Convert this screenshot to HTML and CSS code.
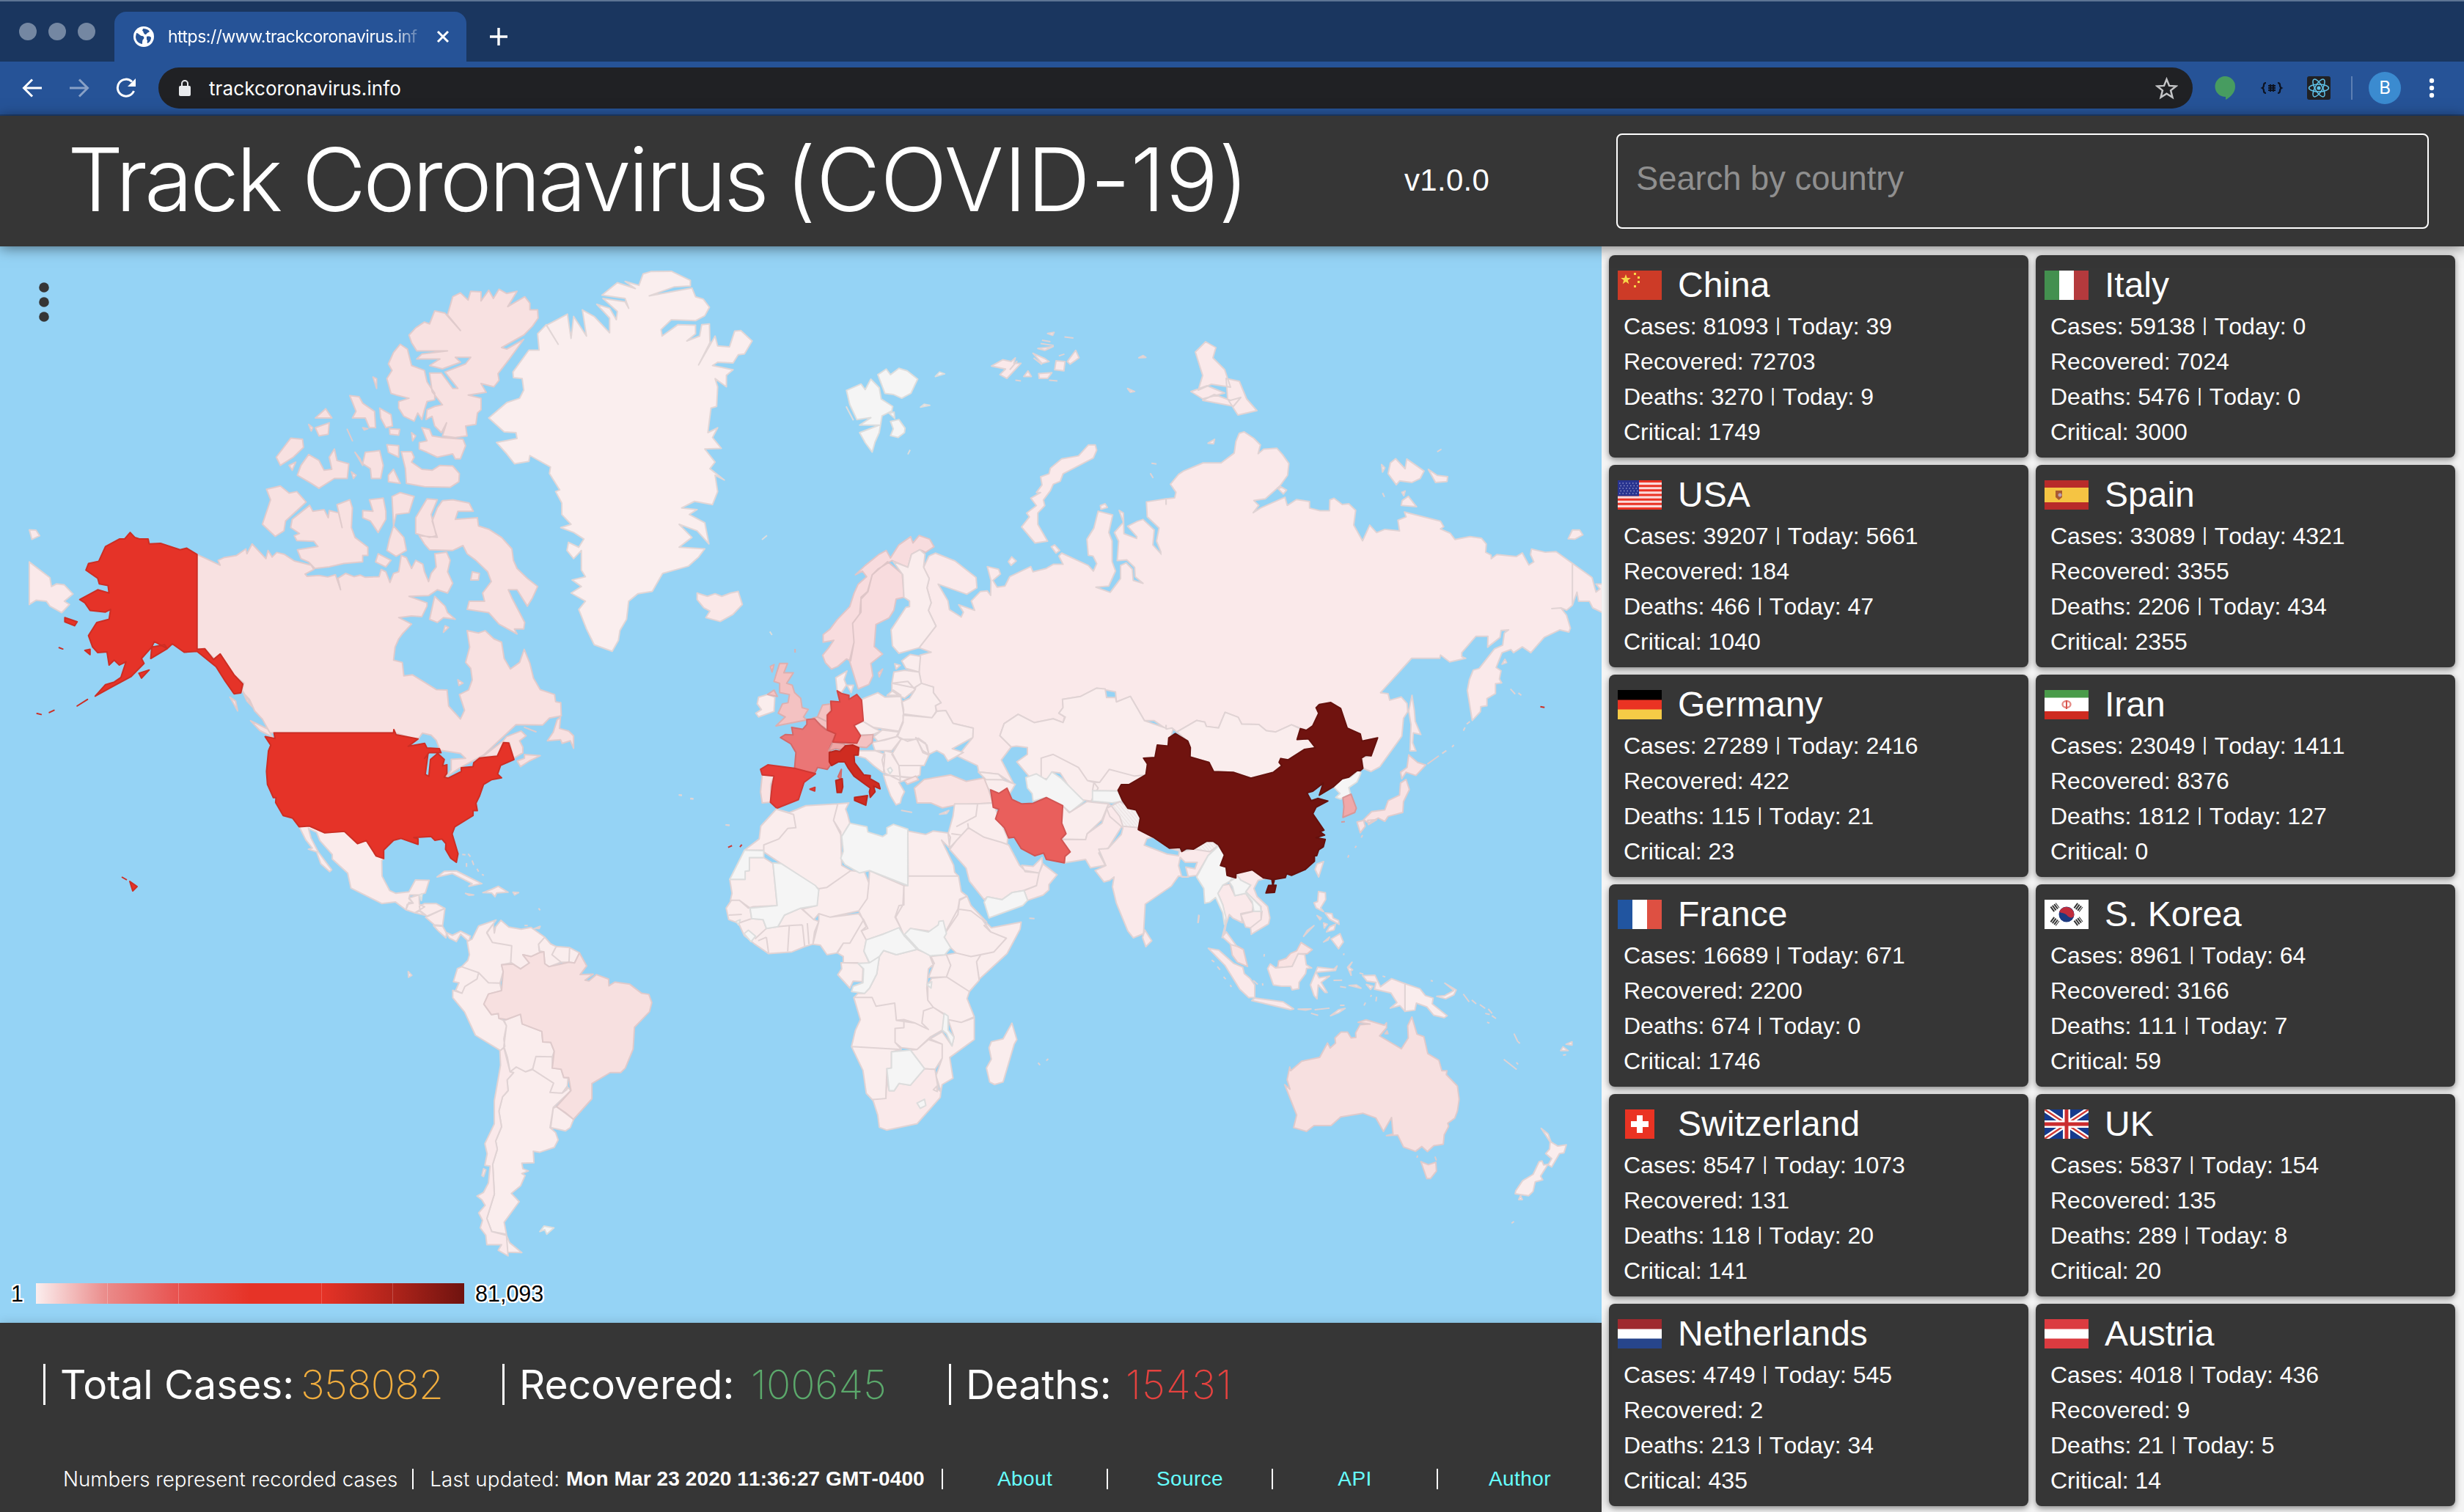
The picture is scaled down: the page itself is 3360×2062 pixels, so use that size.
FILE: index.html
```html
<!DOCTYPE html>
<html lang="en">
<head>
<meta charset="utf-8">
<title>Track Coronavirus (COVID-19)</title>
<link rel="stylesheet" href="styles.css">
</head>
<body>
<div class="browser">
  <div class="tabstrip">
    <div class="lights"><i></i><i></i><i></i></div>
    <div class="tab">
      <svg class="favicon" viewBox="0 0 28 28"><circle cx="14" cy="14" r="14" fill="#fff"/><path d="M4 9c3 0 4 3 7 4 3 0 4 2 3 4-2 1-2 4-2 7-6-1-9-5-9-10zM13 3c4 0 7 1 9 4-2 2-3 1-4 3s-3 1-4-1 0-2-2-3zM18 14c3-1 5 0 6 1 0 4-2 7-5 8-1-2 1-4-1-5z" fill="#265397"/></svg>
      <span class="tab-title">https://www.trackcoronavirus.inf</span>
      <svg class="tab-close" viewBox="0 0 18 18"><path d="M2 2l14 14M16 2L2 16" stroke="#fff" stroke-width="3"/></svg>
    </div>
    <svg class="plus" viewBox="0 0 24 24"><path d="M12 0v24M0 12h24" stroke="#fff" stroke-width="3.4"/></svg>
  </div>
  <div class="toolbar">
    <svg class="nav" viewBox="0 0 28 28"><path d="M27 14H3M14 2.500L2.500 14 14 25.500" fill="none" stroke="#fff" stroke-width="3"/></svg>
    <svg class="nav dim" viewBox="0 0 28 28"><path d="M1 14h24M14 2.500L25.500 14 14 25.500" fill="none" stroke="#fff" stroke-width="3"/></svg>
    <svg class="nav" viewBox="0 0 28 28"><path d="M24.500 18A11.500 11.500 0 1 1 22 5.500" fill="none" stroke="#fff" stroke-width="3"/><path d="M27 1v11H16z" fill="#fff"/></svg>
    <div class="omnibox">
      <svg class="lock" viewBox="0 0 16 22"><rect y="8" width="16" height="14" rx="2" fill="#e8eaed"/><path d="M4 9V5a4 4 0 0 1 8 0v4" fill="none" stroke="#e8eaed" stroke-width="2"/></svg>
      <span class="url">trackcoronavirus.info</span>
      <svg class="star" viewBox="0 0 30 30"><path d="M15 3l3.400 8.500 9 .600-7 5.700 2.300 9L15 22l-7.700 4.800 2.300-9-7-5.700 9-.600z" fill="none" stroke="#c4c5c7" stroke-width="2.400"/></svg>
    </div>
    <svg class="ext ext-a" viewBox="0 0 32 32"><path d="M16 0a14 14 0 0 1 14 14c0 8-6 14-13 18v-4A14 14 0 1 1 16 0z" fill="#479c60"/></svg>
    <svg class="ext ext-b" viewBox="0 0 32 32"><path d="M8 9q-3 0-3 3t-2 4q2 1 2 4t3 3M24 9q3 0 3 3t2 4q-2 1-2 4t-3 3M11 13h10M11 16h10M11 19h10M14 11v10M18 11v10" fill="none" stroke="#0c1220" stroke-width="2.200"/></svg>
    <svg class="ext ext-c" viewBox="0 0 32 32"><rect width="32" height="32" rx="3" fill="#202124"/><g fill="none" stroke="#61c4ea" stroke-width="1.500"><ellipse cx="16" cy="16" rx="13.500" ry="5"/><ellipse cx="16" cy="16" rx="13.500" ry="5" transform="rotate(60 16 16)"/><ellipse cx="16" cy="16" rx="13.500" ry="5" transform="rotate(120 16 16)"/></g><circle cx="16" cy="16" r="2.600" fill="#61c4ea"/></svg>
    <i class="bar-sep"></i>
    <span class="avatar">B</span>
    <svg class="more" viewBox="0 0 8 28"><g fill="#fff"><circle cx="4" cy="4" r="3.200"/><circle cx="4" cy="14" r="3.200"/><circle cx="4" cy="24" r="3.200"/></g></svg>
  </div>
</div>

<header class="header">
  <h1>Track Coronavirus <span class="caps">(COVID-19)</span></h1>
  <span class="version">v1.0.0</span>
  <input class="search" type="text" placeholder="Search by country">
</header>

<div class="content">
<main class="left">
<section class="map">
<svg class="world" viewBox="0 0 2184 1468">
<defs><pattern id="hatch" width="8" height="8" patternUnits="userSpaceOnUse" patternTransform="rotate(-40)"><rect width="8" height="8" fill="#f5f0f0"/><path d="M0 0V8" stroke="#cfcaca" stroke-width="3"/></pattern></defs>
<!-- North America, Greenland -->
<g transform="translate(0 4) scale(.70153 .44643)">
<path class="c-can" d="M383,932 428,965 424,950 435,942 460,935 478,915 480,930 490,900 502,920 517,945 521,920 529,940 538,926 553,932 572,952 605,965 610,978 593,992 597,999 620,996 637,1001 652,994 662,1040 657,1005 672,990 688,1000 700,995 710,1002 737,1000 741,978 750,985 758,1018 765,990 775,985 780,935 790,942 800,975 808,950 822,962 825,985 833,1015 838,990 848,970 845,930 868,925 875,950 870,985 880,1020 870,1050 850,1040 833,1058 795,1060 830,1080 830,1090 820,1122 800,1120 775,1125 800,1145 782,1175 775,1190 768,1215 765,1255 782,1262 785,1303 802,1300 848,1345 869,1346 872,1395 895,1435 903,1408 893,1360 911,1346 918,1315 915,1280 905,1262 913,1215 908,1165 930,1172 943,1165 960,1190 975,1200 980,1250 992,1282 1010,1262 1019,1222 1030,1265 1037,1310 1050,1345 1078,1360 1080,1382 1090,1385 1091,1425 1068,1432 1055,1453 1003,1452 940,1545 895,1583 867,1612 877,1590 877,1558 905,1555 895,1540 855,1530 848,1500 838,1484 821,1478 812,1498 765,1476 533,1476 525,1478 510,1435 495,1410 485,1375 470,1350 474,1325 454,1300 428,1236 418,1253 398,1220 383,1220Z
M518,733 545,723 562,745 577,740 595,772 555,830 552,860 535,877 510,840 526,765Z
M602,782 608,800 630,795 638,820 640,798 658,805 665,850 655,780 680,765 685,790 683,850 690,880 715,910 715,935 705,935 705,955 668,960 640,970 612,975 600,955 585,945 578,918 618,908 610,892 577,890 572,875 582,868 565,850 568,825Z
M795,262 808,240 825,222 835,228 845,188 865,195 895,248 870,200 880,145 895,133 910,155 915,128 935,130 935,158 950,125 959,150 970,122 985,135 1005,128 987,175 1020,145 1030,165 1030,185 1045,185 1046,210 1035,235 1018,262 975,300 985,305 1018,275 990,335 968,380 970,400 960,420 935,410 945,437 910,445 935,455 935,490 928,500 925,535 905,540 908,570 885,575 860,570 868,530 858,560 845,540 840,510 828,520 830,490 845,480 860,475 840,435 835,378 858,378 880,425 890,425 865,375 905,350 915,330 885,330 895,345 860,365 835,355 855,335 810,335 820,320 870,310 810,310 800,285Z
M778,290 792,305 800,355 825,370 830,405 845,440 845,460 830,465 825,490 820,520 812,500 805,525 785,510 775,485 775,465 795,455 770,445 760,440 752,395 762,370 755,350 765,315Z
M820,545 835,550 840,570 860,575 900,580 905,600 895,640 885,640 880,625 850,635 830,620 815,610 815,590 830,585Z
M780,618 800,618 805,635 800,650 820,672 840,675 855,660 880,662 893,685 892,710 875,727 825,725 790,715 788,670Z
M680,447 698,450 705,470 728,495 730,545 718,545 710,515 685,515 692,495ZM738,485 760,505 763,540 750,545 740,515ZM633,487 645,515 613,515ZM640,530 638,565 620,570 613,545ZM565,577 588,580 590,605 570,635 545,660 537,635ZM600,627 620,645 630,675 645,672 640,635 650,610 655,645 678,655 675,700 650,700 620,730 605,715 578,690 585,660ZM690,620 705,660 700,640ZM710,620 738,615 745,660 740,700 722,700 720,670 705,655ZM752,597 775,600 775,635 755,620ZM765,672 778,715 755,710 755,690ZM757,548 777,550 775,568 758,565ZM725,390 732,395 732,425ZM600,535 608,545 605,555ZM675,550 685,585ZM718,765 745,760 750,800 750,825 735,865 720,830 705,820 705,798 725,800ZM778,743 805,755 795,805 770,810 765,845 762,755ZM830,762 850,765 838,810 848,875 835,880 808,868 808,820ZM765,845 785,880 790,920 770,938 752,920 757,885ZM735,930 760,950 750,970 730,955ZM562,660 575,650 568,675ZM683,680 692,690 687,700ZM800,560 808,570 802,585ZM705,545 715,548 708,552Z
M850,790 860,768 880,765 912,775 920,800 890,800 885,825 928,820 930,845 950,855 975,880 995,915 998,950 1005,975 1025,1005 1045,1030 1035,1065 1025,1090 1005,1040 988,1040 995,1065 1020,1140 1018,1160 1000,1160 1005,1175 970,1145 950,1110 908,1100 912,1075 942,1075 938,1050 955,1015 948,985 925,950 908,930 900,905 880,920 835,918 825,900 815,875 850,880 840,830Z
M845,1060 865,1090 870,1110 885,1130 862,1125 850,1140 835,1130ZM865,1150 872,1155 862,1170ZM918,985 932,990 930,1010 915,1010ZM487,1440 520,1465 530,1490 505,1470ZM447,1368 458,1380 462,1410ZM890,1315 900,1325 892,1332ZM470,1345 492,1400 480,1380Z"/>
<path class="c-grl" d="M1250,75 1265,68 1305,67 1342,95 1342,112 1310,115 1262,142 1345,118 1352,145 1367,152 1379,177 1370,203 1352,218 1305,215 1285,245 1287,265 1318,230 1352,232 1352,258 1335,280 1360,265 1364,230 1379,228 1380,285 1358,353 1390,265 1395,295 1418,298 1428,250 1440,248 1462,280 1447,320 1435,322 1425,347 1395,345 1385,355 1425,368 1412,385 1412,420 1390,395 1395,420 1393,480 1382,485 1376,560 1395,545 1385,575 1402,608 1370,610 1390,650 1380,670 1408,705 1390,690 1395,740 1385,780 1350,770 1325,790 1355,795 1340,810 1370,835 1378,900 1355,860 1320,840 1345,880 1320,910 1370,915 1358,940 1338,968 1288,990 1268,1045 1240,1052 1222,1075 1218,1130 1205,1165 1202,1195 1190,1228 1155,1208 1140,1160 1125,1100 1138,1075 1110,1050 1130,1030 1112,1010 1138,1000 1130,980 1130,920 1115,945 1102,920 1105,895 1125,910 1135,885 1115,865 1090,850 1110,840 1092,810 1092,775 1080,740 1088,735 1068,685 1070,665 1030,630 1028,648 1000,655 985,625 965,590 1005,578 1003,560 980,558 950,515 985,468 1010,455 1018,430 1015,395 998,392 997,375 1028,308 1048,308 1045,258 1062,230 1085,290 1062,232 1103,198 1110,272 1115,205 1140,265 1132,185 1155,205 1185,255 1185,210 1160,168 1185,180 1198,215 1200,190 1172,150 1215,160 1222,180 1215,150 1170,140 1200,102 1235,120 1215,98 1242,110Z"/>
<path class="c-usa" d="M253,865 262,880 272,885 288,885 290,900 312,898 350,918 363,913 383,932 383,1222 398,1220 415,1253 428,1236 455,1300 472,1328 468,1355 455,1358 438,1320 420,1275 383,1228 358,1231 335,1205 325,1220 300,1198 295,1215 275,1250 280,1265 255,1305 220,1335 185,1365 205,1330 222,1322 235,1308 245,1260 232,1270 222,1255 212,1270 208,1230 190,1232 180,1215 172,1180 188,1140 212,1130 215,1100 205,1108 175,1103 165,1080 155,1070 190,1040 212,1050 210,1027 193,1022 190,1005 167,980 172,960 192,953 205,908 232,885 242,885ZM126,1125 150,1138 145,1150 126,1138ZM270,1295 290,1285 275,1310ZM150,1395 170,1375ZM96,1415 105,1408ZM72,1418 80,1421ZM165,1225 175,1222 175,1238ZM295,1215 320,1208 325,1220 293,1250ZM115,1217 122,1221Z"/>
<path class="c-rus" d="M57,857 70,858 77,875 62,886ZM57,955 97,1003 100,1030 110,1022 125,1025 142,1053 125,1075 135,1085 120,1110 97,1090 90,1075 70,1072 57,1085Z"/>
<path class="c-isl" d="M1355,1050 1375,1060 1390,1052 1403,1060 1420,1050 1435,1045 1443,1085 1425,1115 1400,1137 1372,1125 1380,1105 1368,1095 1355,1070Z"/>
</g>
<!-- USA, Latin America -->
<g transform="translate(300 614) scale(.44643 .5102)">
<path class="c-can" d="M803,160 865,118 875,107 920,92 935,105 915,118 925,135 925,150 897,165 884,123 865,122 847,158 793,162ZM930,155 978,158 945,172 918,187 908,172 930,165ZM1030,62 1040,55 1037,85 1065,92 1080,105 1080,138 1070,118 1045,125 1040,115 1000,118 1018,95ZM930,82 965,94Z"/>
<path class="c-mex" d="M242,348 273,346 320,364 380,360 420,393 447,385 477,426 500,433 494,438 495,480 518,518 537,526 577,522 597,490 639,491 627,525 609,530 580,530 577,540 590,552 572,555 568,570 536,549 494,553 400,512 390,472 343,434 343,422 305,385 295,363 270,352 278,378 300,415 341,463 335,468 308,447 295,415 270,408 282,405 262,383Z
M568,570 577,550 590,552 578,538 608,530 609,555 625,562 595,578ZM609,560 625,553 660,553 687,566 632,587 612,575ZM687,566 680,612 655,610 628,590ZM652,612 680,614 692,632 690,645 665,625ZM690,630 710,638 735,627 765,640 760,655 735,635 722,655 700,645ZM595,578 612,573 630,585Z
M663,482 685,467 722,466 800,500 760,507 770,500 710,473ZM803,524 830,515 850,507 880,523 845,525 840,535 830,525ZM750,526 775,530 760,531ZM895,523 912,524 900,530ZM960,620 978,614 975,620ZM740,422 750,423M758,420 765,428M770,438 775,450M785,460 790,468M753,445 753,455M800,475 806,478M930,612 940,612M973,566 978,571M575,735 586,745 576,750Z"/>
<path class="c-usa" d="M138,107 168,112 165,97 530,97 531,88 538,102 605,113 575,133 625,125 632,137 670,139 675,150 638,150 625,165 635,155 627,208 638,213 643,168 665,152 685,168 680,185 693,182 693,205 685,215 697,218 737,200 737,190 773,187 775,177 793,164 847,159 866,123 882,124 898,168 857,184 848,207 860,217 830,222 805,235 793,265 782,285 786,305 773,305 773,318 717,348 709,367 727,420 722,443 705,432 689,408 690,393 678,381 656,384 645,374 592,377 605,380 605,395 553,379 530,384 500,410 500,433 477,426 447,385 420,393 380,360 320,364 273,346 242,348 222,325 193,318 170,283 171,270 163,270 145,235 142,200 148,145 155,130Z"/>
<path class="c-none" d="M610,530 618,527 615,545ZM977,1430 990,1415 1020,1420 998,1437 992,1425Z"/>
<path class="c-few" d="M843,597 790,613 770,648 755,655 762,690 757,705 738,722 790,738 820,765 855,766 865,735 860,717 888,712 891,666 832,657 815,632Z
M858,598 882,616 920,622 950,617 992,643 973,662 977,684 950,695 925,690 945,712 918,728 888,710 891,666 832,657 815,630 835,607 838,632 842,615Z
M992,643 1010,661 1027,668 1014,690 1042,710 1005,722 992,714 989,682 975,680 973,662ZM1027,668 1068,671 1066,710 1042,710 1014,690ZM1068,671 1098,685 1083,712 1066,710Z
M738,722 790,738 785,755 748,775 739,793 720,785 730,765 713,762 725,727Z
M790,738 820,765 855,766 860,786 820,795 806,822 829,850 850,847 852,860 865,865 875,880 867,915 870,935 858,947 780,905 747,843 711,805 711,785 739,793 748,775 785,755Z
M918,849 923,875 983,895 986,923 1010,924 1021,948 1015,963 965,962 955,995 933,1003 905,990 886,1003 878,965 867,935 875,880 868,866Z
M965,962 1015,963 1015,993 1042,996 1050,1018 1063,1020 1060,1050 1045,1060 1008,1058 1019,1033 955,997Z
M886,1003 905,990 933,1003 955,997 1019,1033 1008,1058 1045,1060 1060,1042 1072,1053 1018,1098 1008,1152 1025,1165 1033,1185 1021,1205 977,1218 957,1215 959,1246 922,1247 925,1262 942,1268 922,1275 932,1280 918,1308 890,1328 914,1350 868,1405 875,1437 830,1430 815,1395 838,1330 833,1250 847,1210 842,1188 860,1150 852,1108 863,1070 880,1053 877,1025Z
M1018,1100 1028,1096 1080,1130 1070,1152 1055,1161 1010,1152ZM875,1440 885,1460 922,1486 876,1485Z"/>
<path class="c-rus" d="M855,947 867,938 886,1003 897,1005 877,1025 880,1053 863,1070 852,1108 860,1150 842,1188 847,1210 833,1250 838,1330 815,1395 830,1430 875,1440 880,1495 850,1480 860,1465 815,1465 812,1440 795,1420 802,1400 790,1380 810,1360 800,1345 785,1335 805,1325 820,1300 825,1255 809,1253 816,1222 809,1195 838,1142 838,1080 857,985ZM805,1262 812,1265 805,1283 800,1280Z"/>
<path class="c-bra" d="M989,682 992,714 1005,722 1066,710 1083,712 1098,685 1120,720 1100,743 1140,742 1115,758 1127,760 1150,743 1187,755 1188,773 1206,763 1252,769 1288,793 1310,796 1319,818 1312,842 1266,884 1262,942 1238,993 1224,1005 1192,1005 1136,1034 1136,1075 1080,1130 1055,1112 1028,1096 1072,1053 1065,1018 1050,1018 1042,996 1015,993 1021,948 1010,924 986,923 983,895 923,875 918,849 875,863 852,860 850,847 829,850 806,822 820,795 860,786 865,735 860,717 895,715 918,728 945,712 925,690 950,695 977,684Z"/>
<path class="c-none" d="M1402,263 1411,264M1437,272 1446,273M1545,343 1556,344"/>
</g>
<path class="c-usa" d="M166,860l7,4M177,866l10,7 -6,6z"/>
<!-- Europe and western Russia -->
<g transform="translate(1000 4) scale(.38265 .5102)">
<path class="c-rus" d="M1542,667 1472,675 1475,715 1517,745 1508,780 1528,817 1495,790 1500,750 1460,722 1440,727 1405,740 1438,768 1437,773 1392,760 1390,705 1375,698 1390,730 1358,757 1373,780 1368,832 1402,830 1430,850 1432,875 1460,893 1425,885 1422,855 1400,838 1380,845 1380,880 1343,917 1292,903 1338,900 1362,860 1350,835 1350,780 1338,757 1352,710 1300,700 1285,745 1260,775 1265,818 1282,820 1295,840 1283,860 1265,845 1170,812 1160,820 1175,842 1140,842 1115,853 1068,862 1060,848 985,875 968,900 940,903 925,885 952,868 945,855 905,848 918,885 917,925 905,913 880,915 848,940 860,965 803,950 820,970 812,983 770,963 765,940 730,895 832,922 868,905 865,877 790,833 720,812 697,820 678,850 698,880 690,905 705,945 695,965 722,1007 662,1065 705,1077 665,1085 662,1130 670,1160 713,1170 713,1185 740,1212 720,1220 725,1235 757,1233 783,1267 855,1280 853,1305 800,1355 870,1380 875,1397 945,1403 1000,1430 955,1365 990,1330 950,1300 965,1268 1015,1243 1072,1265 1140,1255 1175,1265 1180,1250 1160,1240 1175,1225 1173,1203 1238,1195 1295,1173 1362,1183 1365,1210 1415,1195 1465,1260 1500,1260 1542,1282Z
M1265,523 1290,523 1295,537 1283,558 1175,600 1165,620 1140,628 1130,645 1105,670 1110,685 1085,705 1085,735 1120,780 1075,785 1027,742 1055,715 1045,705 1080,685 1060,665 1095,650 1080,650 1100,630 1095,608 1125,600 1130,585 1170,560 1230,552Z
M920,312 960,295 990,300 1005,290 1000,305 1025,305 975,345 950,335 970,320ZM1068,278 1110,292 1125,300 1100,305ZM1150,298 1182,300 1178,325 1145,322ZM1190,300 1220,270 1232,290 1200,307ZM1088,332 1135,330 1120,345 1090,345ZM1085,265 1140,260 1110,270ZM1120,225 1143,222 1138,230ZM1180,234 1212,237M1445,290 1460,284 1470,289ZM1405,372 1430,380 1415,382ZM1005,350 1025,352M1035,340 1050,325 1062,340ZM1125,350 1155,352M1100,243 1130,247M1095,252 1142,257M1070,290 1100,308M1160,285 1180,280M985,322 1012,298M1308,685 1325,680 1333,690 1310,695ZM980,835 992,822 1008,833 990,845ZM1133,795 1145,790 1163,805 1150,812ZM1490,572 1508,574M1487,600 1495,610Z"/>
<path class="c-none" d="M403,377 455,360 470,375 490,347 520,370 527,400 568,420 565,432 530,445 520,490 505,515 495,542 470,517 450,490 520,470 450,470 490,450 440,455 415,415ZM515,335 545,320 560,335 590,318 620,325 657,347 633,385 600,398 570,388 540,385 525,355ZM560,460 590,455 612,478 610,490 587,503 560,498 570,480ZM555,438 573,435 575,452ZM402,420 428,457M720,340 735,328 753,333ZM667,422 680,414 700,417ZM622,548 630,536M102,776 120,765M130,1022 138,1031"/>
<path class="c-nor" d="M435,870 470,845 520,815 545,805 560,825 590,790 632,768 640,785 662,765 700,775 715,795 685,810 665,803 635,815 622,850 565,832 515,855 495,870 480,915 455,935 450,975 425,1000 430,1050 418,1100 403,1095 372,1115 350,1122 328,1105 318,1085 340,1065 358,1045 320,1050 320,1030 345,1015 370,990 415,955 430,920 445,895 475,875 460,860Z
M550,835 602,868 608,930 580,935 572,965 555,985 508,1003 502,1062 532,1082 490,1107 497,1140 483,1163 445,1175 414,1100 430,1050 425,1000 455,970 455,930 478,915 495,870 518,855ZM517,1132 532,1122 520,1143Z"/>
<path class="c-few" d="M665,803 683,815 678,850 698,880 690,905 705,945 695,965 722,1007 662,1065 590,1080 567,1060 562,1017 615,957 628,955 628,940 608,930 604,870 570,835 622,850 635,815Z
M365,1145 405,1127 395,1150 403,1165 385,1185 370,1180ZM405,1165 428,1165 420,1185ZM122,1190 148,1197 145,1235 90,1250 80,1240 100,1230 85,1215 90,1197Z
M457,1203 515,1185 540,1197 597,1195 607,1230 605,1260 590,1288 500,1278 463,1262ZM430,1273 463,1262 502,1280 525,1288 495,1298 453,1297ZM500,1303 530,1285 590,1290 580,1303 515,1315ZM495,1318 540,1312 585,1302 597,1310 565,1340 505,1340Z
M600,1100 630,1083 667,1088 662,1130 615,1120ZM572,1130 610,1125 662,1130 670,1160 645,1172 565,1160ZM565,1160 622,1155 648,1177 610,1200 595,1195 565,1180ZM548,1192 570,1178 597,1192ZM575,1108 595,1112 580,1122Z
M650,1170 670,1160 713,1170 713,1185 740,1212 720,1220 723,1235 708,1252 607,1242 600,1210 628,1200 648,1177Z
M605,1245 708,1252 725,1235 757,1233 783,1267 855,1280 853,1305 780,1335 820,1345 765,1368 750,1350 725,1340 697,1350 685,1320 660,1307 620,1315 585,1302 605,1265Z
M597,1310 655,1310 675,1345 697,1352 680,1380 590,1380 565,1350ZM650,1305 690,1325 697,1350 675,1340ZM590,1380 668,1380 665,1405 640,1415 595,1410ZM540,1340 565,1345 590,1380 595,1420 540,1400 530,1365ZM445,1340 505,1340 540,1350 535,1400 500,1380 470,1360 445,1355ZM535,1405 640,1412 590,1425 610,1450 600,1465 595,1480 580,1485 560,1460 545,1430ZM600,1500 635,1505ZM735,1510 768,1500 760,1508Z
M873,1397 945,1403 965,1418 900,1417ZM895,1417 960,1418 1005,1430 985,1455 940,1455 905,1440Z
M950,1300 965,1268 1015,1243 1072,1265 1140,1255 1175,1265 1183,1250 1160,1240 1175,1225 1173,1203 1238,1195 1295,1173 1325,1175 1330,1198 1362,1198 1365,1210 1415,1195 1465,1260 1542,1280 1568,1280 1550,1327 1510,1327 1502,1360 1473,1360 1475,1405 1430,1408 1340,1390 1305,1425 1262,1420 1230,1385 1140,1350 1097,1360 1097,1415 1055,1410 1010,1370 1048,1350 1048,1332 1010,1328 990,1330Z
M1097,1360 1140,1350 1230,1385 1262,1420 1285,1425 1300,1440 1275,1475 1225,1470 1165,1400 1135,1397 1125,1415 1097,1415ZM1285,1425 1305,1425 1340,1390 1430,1408 1475,1405 1410,1432 1370,1448 1280,1447Z"/>
<path class="c-tur" d="M645,1440 680,1417 775,1405 830,1422 893,1413 910,1445 925,1480 795,1485 745,1493 705,1480 655,1480ZM610,1420 650,1408 660,1418 620,1430ZM103,1405 145,1408 133,1430 133,1478 103,1480 97,1450Z"/>
<path class="c-none" d="M1042,1412 1080,1402 1115,1418 1135,1397 1170,1415 1250,1475 1200,1505 1172,1487 1115,1465 1068,1475 1065,1455 1048,1440ZM1280,1447 1370,1448 1390,1475 1350,1480 1280,1475ZM550,1390 560,1385 567,1393 558,1402Z"/>
<path class="c-gbr" d="M165,1107 193,1107 180,1132 214,1132 190,1160 210,1165 218,1185 240,1200 245,1225 267,1230 250,1250 262,1258 152,1274 185,1250 160,1240 175,1215 195,1212 200,1190 165,1185 165,1160 145,1155 155,1130ZM122,1190 145,1178 157,1195ZM132,1115 145,1110 138,1130ZM220,1068V1078M347,1215 345,1235 333,1245 333,1262 300,1250 318,1218ZM283,1253 300,1250 333,1262 337,1285 318,1275ZM400,1322 440,1320 453,1300 498,1297 495,1318 475,1332 445,1330Z"/>
<path class="c-fra" d="M262,1257 290,1255 310,1272 332,1285 365,1295 342,1335 355,1370 335,1390 300,1385 290,1400 218,1390 223,1345 205,1322 168,1305 185,1297 213,1298 208,1278 247,1283 262,1270ZM385,1390 383,1417 373,1410Z"/>
<path class="c-che" d="M355,1317 395,1322 400,1333 380,1337 365,1335 340,1340Z"/>
<path class="c-deu" d="M370,1180 385,1187 412,1192 412,1203 440,1190 457,1205 463,1260 430,1273 453,1300 440,1320 355,1317 365,1295 335,1285 335,1245 350,1233 347,1208 380,1210Z"/>
<path class="c-esp" d="M97,1390 123,1378 218,1387 293,1402 252,1425 232,1471 155,1494 132,1478 138,1435 145,1408 103,1405ZM273,1443 291,1438 290,1448Z"/>
<path class="c-ita" d="M342,1345 365,1340 380,1342 400,1327 425,1325 447,1332 445,1352 430,1352 432,1372 465,1405 488,1407 487,1415 518,1428 523,1442 500,1435 505,1450 488,1465 485,1450 488,1440 430,1408 408,1385 397,1370 375,1370 350,1380 342,1370ZM432,1465 478,1460 472,1486 432,1473ZM365,1420 388,1415 390,1437 385,1452 370,1452Z"/>
</g>
<!-- Africa and the Middle East -->
<g transform="translate(900 514) scale(.44643 .47832)">
<path class="c-few" d="M355,530 408,545 415,583 390,585 363,615 317,632 317,647 258,647 303,615 308,578Z
M355,530 395,540 445,520 543,515 530,562 552,595 555,690 583,705 510,753 485,757 317,652 317,632 363,615 390,585 415,583 408,545Z
M543,515 577,512 567,530 573,545 580,570 555,608 530,562ZM757,592 812,602 835,592 880,598 887,610 883,640 860,618 897,690 900,710 912,721 758,721Z
M213,730 260,730 260,707 273,705 273,668 317,668 345,685 358,805 285,808 270,812 243,790 215,790 220,770Z
M485,757 510,753 583,705 625,710 638,740 633,785 607,820 520,838 485,828 470,845 435,815 478,805Z
M640,705 745,748 742,803 720,838 735,868 680,887 630,903 615,877 630,865 607,820 633,785 638,740Z
M758,721 912,721 920,765 938,778 915,790 910,830 870,885 862,850 840,880 765,870 745,890 735,868 718,838 730,805 745,803 745,748 757,748Z
M910,815 950,820 985,845 1010,880 1058,898 1020,937 950,950 905,940 888,925 868,895 875,875ZM938,778 950,805 998,852 985,845 950,820 910,815 915,787Z
M998,855 1012,868 1103,852 1100,872 1060,942 975,1015 967,965 980,945 1020,937 1058,898 1010,880 990,862ZM905,940 950,950 980,945 967,965 975,1018 945,1050 875,1008 888,975 875,945ZM825,950 875,945 888,975 875,1008 820,1010 835,975Z
M875,1008 945,1050 938,1070 960,1122 920,1138 880,1130 865,1112 835,1095 818,1075 818,1030 830,1012Z
M683,933 722,945 785,930 825,945 838,970 820,985 815,1040 818,1075 835,1095 805,1105 800,1140 820,1158 780,1140 722,1132 717,1083 660,1092 648,1067 592,1067 605,1055 625,1055 640,1040 662,1000 670,950Z
M553,968 605,968 620,985 618,1022 590,1020 580,1040 543,1002 555,985ZM622,845 635,870 615,877 630,903 623,935 640,970 560,968 560,950 542,940 560,912 580,912ZM485,828 520,838 607,828 622,845 580,912 560,912 540,940 510,945 490,918 467,915 472,880 485,850Z
M470,845 485,850 467,915 442,922 403,937 332,942 290,915 257,890 240,855 210,845 202,812 218,790 243,790 275,812 280,842 315,845 325,870 360,865 380,832 430,812ZM210,832 250,830M240,855 280,842M290,900 325,870M325,895 332,942M395,862 390,935M360,865 395,862 435,860M435,860 442,922M450,855 455,915M300,905 325,895
M592,1067 648,1067 660,1092 717,1083 722,1132 745,1130 745,1153 718,1155 718,1195 737,1215 585,1207 597,1160 612,1130ZM718,1155 745,1153 745,1130 780,1140 820,1158 800,1140 805,1105 835,1095 875,1120 862,1160 825,1180 785,1215 737,1210 718,1195Z
M880,1130 920,1138 960,1125 960,1187 885,1238 895,1297 862,1315 858,1335 843,1290 862,1240 862,1200 825,1185 862,1165 892,1205 898,1180ZM785,1215 820,1187 862,1200 862,1240 840,1272 808,1270 765,1217ZM585,1207 737,1215 707,1222 707,1268 693,1270 690,1355 650,1360 630,1340 620,1275Z
M1075,1140 1090,1187 1082,1200 1048,1308 1022,1315 1007,1308 997,1268 1012,1243 1005,1210 1012,1193 1048,1185Z
M900,515 970,515 1018,512 1035,555 1062,612 1060,632 990,612 942,583 905,620 885,640 880,600 895,550ZM970,515 965,550 905,580M940,570 942,583M890,600 930,605M1230,520 1250,540 1305,508 1320,510 1370,515 1350,560 1305,600 1300,617 1228,615 1240,600 1227,570ZM1155,1253 1161,1260M1180,1247 1186,1242M1128,841 1144,842M57,489 67,490M92,500 102,501M200,575 213,576"/>
<path class="c-rus" d="M690,1355 693,1300 700,1333 715,1333 730,1312 765,1317 808,1270 840,1272 850,1330 858,1335 856,1352 785,1427 692,1445 670,1437 665,1402 650,1358ZM835,1330 845,1320 847,1335ZM885,645 905,620 942,583 990,610 1045,625 1065,632 1098,690 1115,705 1158,712 1150,748 1110,762 1075,768 1045,788 1000,780 990,788 945,735 935,698ZM1158,712 1168,685 1213,717 1188,745 1188,760 1170,775 1123,790 1112,762 1150,748ZM1105,690 1140,693 1167,668 1168,690 1158,712 1115,708ZM1370,515 1410,540 1410,580 1370,640 1340,655 1360,690 1315,697 1300,673 1235,683 1237,665 1253,652 1225,617 1300,617 1305,600 1350,570Z"/>
<path class="c-none" d="M258,647 317,648 317,668 273,668 273,705 260,707 260,730 213,730ZM580,570 632,580 635,595 680,608 693,600 693,583 713,573 757,587 757,748 640,705 610,712 565,688 552,670 560,650 555,608ZM345,683 370,685 475,748 485,760 480,805 430,812 380,832 360,865 325,870 315,845 280,842 275,812 358,805ZM765,870 820,880 850,860 852,850 865,848 875,885 868,895 888,925 870,945 825,948 790,930 747,887ZM630,903 680,887 730,868 745,890 785,930 722,945 683,933 670,950 640,968 623,935ZM670,950 662,1000 640,1040 625,1055 585,1050 590,1035 620,1025 622,985 605,970 640,968ZM868,1112 880,1120 880,1160 898,1180 892,1205 875,1170 862,1160ZM707,1222 765,1217 808,1270 765,1317 730,1312 715,1333 700,1333 693,1270 707,1268ZM785,1368 808,1357 812,1375 795,1383ZM990,795 1000,780 1045,788 1075,768 1112,762 1123,790 1108,805 1005,840ZM257,885 270,875 292,892 278,908ZM232,850 245,845 240,860ZM815,1030 830,1022 828,1040Z"/>
<path class="c-irn" d="M1010,475 1035,485 1060,470 1075,502 1105,515 1140,513 1180,497 1230,520 1227,570 1240,600 1225,615 1253,652 1237,665 1235,683 1180,673 1172,655 1145,663 1103,642 1082,610 1065,612 1052,583 1025,558 1035,530 1018,525Z"/>
<path class="c-esp" d="M208,639 220,634M244,638 250,631"/>
</g>
<!-- Asia -->
<g transform="translate(1500 264) scale(.44643)">
<path class="c-rus" d="M202,180 228,177 232,160 215,135 240,105 255,95 315,70 370,70 410,40 415,5 425,-20 440,-25 470,-5 490,15 483,42 500,28 540,25 558,45 577,72 573,108 550,140 505,180 470,185 485,200 468,222 490,208 530,190 565,175 572,200 600,182 640,188 640,208 672,216 701,216 702,183 715,178 740,197 760,195 781,215 775,260 802,308 824,260 845,283 870,273 915,278 910,245 935,235 930,220 1040,248 1050,265 1040,272 1070,285 1084,304 1130,295 1165,300 1180,318 1178,343 1195,352 1195,363 1212,350 1272,356 1290,345 1310,382 1325,372 1315,350 1318,333 1360,343 1393,341 1503,420 1515,465 1527,455 1515,440 1534,440 1534,527 1505,513 1495,493 1462,493 1457,465 1443,505 1425,520 1408,513 1380,515 1408,513 1425,535 1437,575 1432,587 1405,580 1357,603 1316,650 1290,632 1263,650 1255,640 1228,650 1210,695 1225,705 1220,730 1227,742 1208,745 1208,775 1182,790 1182,812 1163,815 1162,830 1137,857 1122,765 1128,733 1140,703 1158,698 1205,638 1230,627 1235,590 1248,580 1225,582 1222,603 1184,633 1185,600 1148,600 1105,650 1105,662 1117,667 1068,678 1040,657 1038,667 952,667 857,772 880,775 885,795 920,785 938,805 940,830 927,850 922,905 855,998 828,1013 803,1003 800,970 828,965 848,910 800,920 795,898 755,880 735,820 702,803 665,810 668,835 650,873 630,887 585,870 537,892 508,888 485,869 433,868 422,847 382,832 362,880 325,875 320,862 295,857 235,892 220,880 202,883Z
M1443,375V505M953,780 960,825 963,860 980,900 957,895 955,925 965,950 947,950 950,870 943,828ZM903,57 932,88 937,58 990,95 978,118 952,130 915,125 905,137 880,103 887,70ZM1003,90 1030,108 1062,112 1060,127 1025,130ZM923,185 942,172 967,204 920,200ZM1430,302 1443,275 1465,275 1475,290 1450,303ZM545,150 553,143 570,153 560,165ZM860,75 870,85 863,98ZM863,162 869,174M1030,36 1043,28M1228,685 1237,670 1242,680ZM1255,762 1267,775ZM1278,773 1287,780M1110,888 1115,878M1120,868 1130,860M1075,938 1081,932M1045,958 1058,949M922,160 932,156 928,170ZM330,10 350,-2 347,12Z"/>
<path class="fill-rus" d="M188,198H216V870H188Z"/>
<path class="c-few" d="M235,892 295,857 320,862 325,875 362,880 382,832 422,847 433,868 485,869 508,888 537,892 585,870 612,882 602,915 637,913 658,940 625,945 575,977 552,975 555,995 530,1015 461,1033 407,1015 347,1013 333,985 275,968 276,940 268,920Z"/>
<path class="c-rus" d="M85,1125 60,1105 20,1125 30,1150 70,1185 65,1205 25,1248 -4,1250 18,1300 -15,1315 12,1350 30,1345 43,1335 38,1365 50,1415 85,1500 102,1521 133,1508 138,1418 218,1363 240,1332 262,1335 295,1330 330,1270 362,1240 345,1225 325,1226 285,1250 250,1257 212,1247 162,1213 117,1190 123,1155 110,1130ZM162,1213 212,1247 243,1250 240,1270 205,1265 135,1238 143,1218ZM245,1275 260,1290 297,1290 290,1310 262,1305 270,1335 250,1335 240,1300ZM137,1497 158,1530 140,1548 130,1520ZM303,1452 300,1475M360,1385 375,1360 395,1357 412,1392 445,1385 468,1420 465,1440 430,1447 435,1475 405,1460 395,1450 385,1480 380,1510 373,1520 385,1470 375,1420ZM430,1450 470,1440 495,1440 492,1465 460,1490 445,1488ZM415,1325 465,1313 503,1340 483,1345 470,1370 480,1395 512,1425 519,1460 515,1478 462,1510 460,1490 492,1465 492,1425 445,1380 460,1360 430,1345ZM663,1295 683,1288 668,1335 657,1312Z"/>
<path fill="url(#hatch)" d="M35,1118 60,1105 110,1130 123,1155 123,1185 70,1180 60,1150ZM285,1250 325,1226 345,1225 360,1240 335,1258Z"/>
<path class="c-none" d="M362,1240 380,1268 368,1300 385,1305 390,1330 412,1340 375,1360 360,1385 375,1420 385,1460 380,1480 375,1445 353,1398 335,1412 320,1415 317,1370 295,1335 330,1270ZM415,1325 430,1345 460,1360 445,1380 490,1425 492,1440 470,1440 465,1410 445,1385 412,1392 405,1365 395,1350ZM712,1058 740,1035 765,1030 790,1008 797,1017 785,1045 760,1062 765,1082 735,1097 720,1092 733,1080Z"/>
<path class="c-chn" d="M230,897 268,920 276,940 275,968 333,985 347,1013 407,1015 461,1033 530,1015 555,995 547,985 552,973 575,977 625,945 658,940 637,913 602,915 612,882 630,887 650,873 668,835 660,818 670,808 705,802 735,820 755,880 795,898 800,920 848,910 828,965 812,963 798,972 803,1003 795,1010 785,1010 760,1030 740,1035 712,1060 670,1085 682,1048 650,1073 632,1078 645,1102 665,1095 696,1103 660,1122 650,1142 684,1192 672,1197 686,1207 660,1215 688,1220 682,1243 668,1252 662,1270 655,1270 655,1287 627,1312 585,1330 570,1325 566,1337 530,1343 500,1338 465,1313 415,1325 415,1338 388,1330 385,1305 368,1300 380,1268 362,1237 345,1225 325,1226 285,1250 265,1248 250,1257 245,1245 212,1247 162,1213 117,1190 123,1155 110,1130 85,1125 68,1100 55,1070 65,1053 88,1053 140,1023 145,990 133,972 168,970 175,932 208,935 210,910ZM515,1361 538,1360 533,1382 507,1384ZM525,1343 533,1343 528,1362Z"/>
<path class="c-kor" d="M742,1093 767,1082 783,1125 778,1138 742,1153 745,1120ZM737,1167 748,1166"/>
<path class="c-jpn" d="M943,962 970,985 995,993 965,1025 935,1015 922,1035 918,1015 938,1000ZM935,1037 945,1068 927,1105 925,1138 880,1150 870,1165 850,1155 820,1170 805,1160 830,1135 870,1130 880,1102 915,1085 918,1048ZM785,1167 805,1162 810,1180 795,1200ZM818,1162 845,1160 820,1175ZM798,1215 802,1207M779,1246 783,1240M757,1276 760,1268M1000,990 1035,965"/>
<path class="c-usa" d="M1345,815 1358,817"/>
</g>
<path class="c-rus" d="M1630,480l14-14 14,8 -4,14 16,16 8,24 -26-4 -18,8 6-20zM1672,516l18,4 10,24 14,16 -26,6 -14-22z M1624,534l22-8 24,10 -30,8z M1640,546l16-8 22,8 14,-4 -10,12z" transform="translate(0 -336)"/>
<!-- South-East Asia and Oceania -->
<g transform="translate(1560 804) scale(.40816 .34439)">
<path class="c-tur" d="M288,425 312,437 332,450 346,517 312,500 295,472ZM447,518 450,495 475,485 490,465 510,455 525,422 562,450 545,467 515,467 495,517 440,523Z"/>
<path class="c-rus" d="M262,400 275,380 310,437 290,430ZM215,445 250,452 300,505 330,520 335,545 355,565 370,590 370,640 350,640 320,607 270,512ZM360,652 370,642 465,657 500,685 490,688ZM413,525 422,507 440,523 495,517 515,467 537,470 542,510 560,523 543,525 540,545 518,580 517,605 495,610 490,595 460,595 432,590ZM580,520 635,527 645,515 640,533 575,540 585,562 620,555 592,580 612,620 605,620 582,590 578,645 568,632 556,590Z
M583,220 606,225 607,252 590,285 600,300 575,285 568,265 580,260ZM605,305 628,308 632,325 650,335 652,350 620,330ZM625,408 655,387 666,420 650,447ZM533,398 545,375 568,355ZM600,345 612,350 602,365ZM610,380 620,360 640,350 635,372ZM600,420 620,400 615,412ZM578,315 592,325 588,332ZM730,553 772,552 790,597 827,565 872,585 872,695 855,672 823,682 845,660 825,622 770,607 775,580 745,575ZM623,712 650,688 672,683 650,700ZM570,688 620,682M515,686 558,685 540,690ZM560,703 580,710ZM680,520 695,500 685,520 697,530 690,535 692,552ZM685,592 710,590 725,603ZM743,588 765,595 757,608ZM633,572 662,571M720,543 733,547M655,597 675,600M735,672 740,660M226,492 235,499M245,517 254,530M266,558 273,567M288,590 292,598M402,468 401,478M396,583 397,593M365,572 380,588M757,637 760,630M775,655 777,637M668,465 667,472M655,671 670,671M958,573 965,575M797,555 806,558M183,312 180,345"/>
<path class="c-few" d="M872,585 922,605 940,632 966,642 963,665 1013,712 1003,720 968,710 945,677 910,662 905,690 872,695ZM978,635 1005,632 1035,612 1005,583 1043,610 1035,630 1008,645ZM1068,628 1085,655ZM1095,650 1110,665M1122,668 1140,683M1150,685 1163,703M1140,703 1155,707M1162,712 1176,723M1202,885 1245,925M1237,785 1247,810ZM1247,812 1256,822M1392,850 1400,835 1417,850ZM1410,825 1430,815 1430,828ZM1244,897 1250,905M1146,738 1154,741M1400,868 1410,866M1228,1534 1236,1527
M1327,1158 1350,1180 1360,1212 1382,1228 1411,1223 1403,1255 1388,1258 1362,1311 1350,1303 1362,1278 1342,1258 1355,1240 1357,1212ZM1330,1287 1335,1303 1350,1300 1325,1347 1332,1362 1307,1370 1300,1408 1285,1425 1240,1417 1242,1405 1265,1365 1300,1340 1320,1290ZM1252,1440 1258,1425 1264,1440Z"/>
<path class="c-bra" d="M895,717 912,785 935,795 948,862 985,888 995,930 1012,930 1010,945 1047,990 1053,1043 1047,1090 1038,1118 1015,1138 1018,1150 1003,1183 1000,1221 968,1227 947,1250 928,1230 907,1249 867,1232 848,1185 810,1187 832,1180 827,1115 800,1170 775,1117 731,1098 657,1113 625,1147 568,1147 543,1170 500,1155 510,1105 470,985 488,1003 478,965 487,915 490,930 527,892 587,877 613,820 622,840 640,820 638,800 658,777 680,777 692,800 708,798 707,780 722,748 755,745 715,738 742,728 803,750 810,740 810,760 787,792 860,843 883,800 881,752ZM925,1290 950,1302 975,1292 977,1327 957,1357 945,1357ZM912,1275 914,1265M972,1270 977,1285M805,783 812,772 815,783Z"/>
</g>
</svg>
<svg class="map-menu" viewBox="0 0 14 54"><g fill="#363636"><circle cx="7" cy="7" r="6.800"/><circle cx="7" cy="27" r="6.800"/><circle cx="7" cy="47" r="6.800"/></g></svg>
<div class="legend"><span class="l-min">1</span><i class="ramp"></i><span>81,093</span></div>
</section>
<footer class="footer">
  <div class="totals">
    <p class="t1"><i></i><span>Total Cases:</span> <b class="orange">358082</b></p>
    <p class="t2"><i></i><span>Recovered:</span> <b class="green">100645</b></p>
    <p class="t3"><i></i><span>Deaths:</span> <b class="red">15431</b></p>
  </div>
  <div class="meta">
    <span class="note">Numbers represent recorded cases</span><i></i>
    <span class="updated">Last updated:</span><strong>Mon Mar 23 2020 11:36:27 GMT-0400</strong>
    <nav><a>About</a><a>Source</a><a>API</a><a>Author</a></nav>
  </div>
</footer>
</main>
<aside class="cards">
  <article class="card"><h2><svg class="flag" viewBox="0 0 60 40"><path fill="#cd3b27" d="M0 0h60v40H0z"/><path fill="#f8d648" d="M11 5l1.800 5h5l-4 3.200 1.500 5-4.300-3-4.300 3 1.500-5-4-3.200h5zM22 3h3v3h-3zM27 8h3v3h-3zM27 14h3v3h-3zM22 20h3v3h-3z"/></svg>China</h2><p>Cases: 81093 <s>|</s> Today: 39</p><p>Recovered: 72703</p><p>Deaths: 3270 <s>|</s> Today: 9</p><p>Critical: 1749</p></article>
  <article class="card"><h2><svg class="flag" viewBox="0 0 60 40"><path fill="#43904f" d="M0 0h20v40H0z"/><path fill="#fff" d="M20 0h20v40H20z"/><path fill="#b43a3d" d="M40 0h20v40H40z"/></svg>Italy</h2><p>Cases: 59138 <s>|</s> Today: 0</p><p>Recovered: 7024</p><p>Deaths: 5476 <s>|</s> Today: 0</p><p>Critical: 3000</p></article>
  <article class="card"><h2><svg class="flag" viewBox="0 0 60 40"><path fill="#fbdada" d="M0 0h60v40H0z"/><path stroke="#ea3223" stroke-width="3.100" d="M0 1.500h60M0 7.700h60M0 13.800h60M0 20h60M0 26.200h60M0 32.300h60M0 38.500h60"/><path fill="#28338f" d="M0 0h29v21.500H0z"/><path stroke="#8c93c8" stroke-width="1.500" stroke-dasharray="1.500 3" d="M2 4h26M3.500 7.500h24M2 11h26M3.500 14.500h24M2 18h26"/></svg>USA</h2><p>Cases: 39207 <s>|</s> Today: 5661</p><p>Recovered: 184</p><p>Deaths: 466 <s>|</s> Today: 47</p><p>Critical: 1040</p></article>
  <article class="card"><h2><svg class="flag" viewBox="0 0 60 40"><path fill="#b82b2a" d="M0 0h60v40H0z"/><path fill="#f5c443" d="M0 10h60v20H0z"/><path fill="#a85a32" d="M15 14h9v9l-4.500 4-4.500-4z"/><circle cx="21" cy="20" r="2.500" fill="#b9a0b0"/></svg>Spain</h2><p>Cases: 33089 <s>|</s> Today: 4321</p><p>Recovered: 3355</p><p>Deaths: 2206 <s>|</s> Today: 434</p><p>Critical: 2355</p></article>
  <article class="card"><h2><svg class="flag" viewBox="0 0 60 40"><path d="M0 0h60v14H0z"/><path fill="#ea3323" d="M0 13.500h60V27H0z"/><path fill="#f6cb46" d="M0 26.500h60V40H0z"/></svg>Germany</h2><p>Cases: 27289 <s>|</s> Today: 2416</p><p>Recovered: 422</p><p>Deaths: 115 <s>|</s> Today: 21</p><p>Critical: 23</p></article>
  <article class="card"><h2><svg class="flag" viewBox="0 0 60 40"><path fill="#fff" d="M0 0h60v40H0z"/><path fill="#4a9b4a" d="M0 0h60v10.500H0z"/><path fill="#ce2b20" d="M0 29h60v11H0z"/><ellipse cx="30" cy="19.500" rx="5.500" ry="4.500" fill="none" stroke="#e58a85" stroke-width="2.400"/><path stroke="#d9534c" stroke-width="2" d="M30 14v12"/></svg>Iran</h2><p>Cases: 23049 <s>|</s> Today: 1411</p><p>Recovered: 8376</p><p>Deaths: 1812 <s>|</s> Today: 127</p><p>Critical: 0</p></article>
  <article class="card"><h2><svg class="flag" viewBox="0 0 60 40"><path fill="#2155a0" d="M0 0h20v40H0z"/><path fill="#fff" d="M20 0h20v40H20z"/><path fill="#de5042" d="M40 0h20v40H40z"/></svg>France</h2><p>Cases: 16689 <s>|</s> Today: 671</p><p>Recovered: 2200</p><p>Deaths: 674 <s>|</s> Today: 0</p><p>Critical: 1746</p></article>
  <article class="card"><h2><svg class="flag" viewBox="0 0 60 40"><path fill="#fff" d="M0 0h60v40H0z"/><circle cx="30" cy="20" r="10.500" fill="#1d3a80"/><path fill="#c02c3c" d="M20 17a10.500 10.500 0 0 1 20.400 4c-1 5-7 4-10 0-3-3-7-3-10.400-4z"/><path stroke="#333" stroke-width="8" stroke-dasharray="2 1" d="M10 13.500l8-6M42 7.500l8 6M10 26.500l8 6M42 32.500l8-6"/></svg>S. Korea</h2><p>Cases: 8961 <s>|</s> Today: 64</p><p>Recovered: 3166</p><p>Deaths: 111 <s>|</s> Today: 7</p><p>Critical: 59</p></article>
  <article class="card"><h2><svg class="flag" viewBox="0 0 60 40"><path fill="#ea3323" d="M10 0h40v40H10z"/><path fill="#fff" d="M26 8h8v8h8v8h-8v8h-8v-8h-8v-8h8z"/></svg>Switzerland</h2><p>Cases: 8547 <s>|</s> Today: 1073</p><p>Recovered: 131</p><p>Deaths: 118 <s>|</s> Today: 20</p><p>Critical: 141</p></article>
  <article class="card"><h2><svg class="flag" viewBox="0 0 60 40"><path fill="#153a8d" d="M0 0h60v40H0z"/><path stroke="#fff" stroke-width="7" d="M0 0l60 40M60 0L0 40"/><path stroke="#d03a35" stroke-width="2.400" d="M0 0l60 40M60 0L0 40"/><path stroke="#fff" stroke-width="10" d="M30 0v40M0 20h60"/><path stroke="#cb2c2e" stroke-width="5" d="M30 0v40M0 20h60"/></svg>UK</h2><p>Cases: 5837 <s>|</s> Today: 154</p><p>Recovered: 135</p><p>Deaths: 289 <s>|</s> Today: 8</p><p>Critical: 20</p></article>
  <article class="card"><h2><svg class="flag" viewBox="0 0 60 40"><path fill="#9f292e" d="M0 0h60v14H0z"/><path fill="#fff" d="M0 13.500h60V27H0z"/><path fill="#27458b" d="M0 26.500h60V40H0z"/></svg>Netherlands</h2><p>Cases: 4749 <s>|</s> Today: 545</p><p>Recovered: 2</p><p>Deaths: 213 <s>|</s> Today: 34</p><p>Critical: 435</p></article>
  <article class="card"><h2><svg class="flag" viewBox="0 0 60 40"><path fill="#db3b40" d="M0 0h60v40H0z"/><path fill="#fff" d="M0 13.500h60v13H0z"/></svg>Austria</h2><p>Cases: 4018 <s>|</s> Today: 436</p><p>Recovered: 9</p><p>Deaths: 21 <s>|</s> Today: 5</p><p>Critical: 14</p></article>
</aside>
</div>
</body>
</html>
```
FILE: styles.css
```css
* { box-sizing: border-box; }
html, body { margin: 0; }
body {
  width: 3360px; height: 2062px; overflow: hidden;
  background: #363636; color: #fff;
  font-family: "Liberation Sans", Arial, sans-serif;
}
h1, h2, p { margin: 0; font-weight: 400; }
svg { display: block; flex: none; }

/* browser chrome */
.browser { font-family: Inter, Roboto, sans-serif; }
.tabstrip { height: 84px; background: #1a365f; border-top: 2px solid #5d7494; display: flex; align-items: flex-start; }
.lights { display: flex; gap: 16px; margin: 29px 26px 0 26px; }
.lights i { width: 24px; height: 24px; border-radius: 50%; background: #7487a2; }
.tab {
  width: 480px; height: 68px; margin-top: 14px; background: #265397;
  border-radius: 16px 16px 0 0; display: flex; align-items: center; padding-left: 26px;
}
.favicon { width: 28px; height: 28px; }
.tab-title {
  width: 350px; margin-left: 19px; font-size: 23px; line-height: 34px; white-space: nowrap;
  letter-spacing: -.5px;
  -webkit-mask-image: linear-gradient(90deg, #000 88%, transparent 100%);
  mask-image: linear-gradient(90deg, #000 88%, transparent 100%);
}
.tab-close { width: 18px; height: 18px; margin-left: 16px; }
.plus { width: 24px; height: 24px; margin: 36px 0 0 32px; }
.toolbar { height: 74px; background: #265397; border-bottom: 2px solid #1f4072; display: flex; align-items: center; padding-left: 30px; }
.nav { width: 28px; height: 28px; margin-right: 36px; }
.dim { opacity: .45; }
.omnibox { width: 2774px; height: 56px; margin-left: -6px; border-radius: 28px; background: #202124; display: flex; align-items: center; padding: 0 20px 0 28px; }
.lock { width: 16px; height: 22px; }
.url { margin-left: 25px; font-size: 26px; letter-spacing: .1px; flex: 1; }
.star { width: 31px; height: 31px; }
.ext { width: 32px; height: 32px; }
.ext-a { margin-left: 28px; }
.ext-b { margin-left: 32px; }
.ext-c { margin-left: 32px; }
.bar-sep { width: 2px; height: 32px; margin-left: 28px; background: #5d7fb3; }
.avatar { width: 44px; height: 44px; margin-left: 22px; border-radius: 50%; background: #3b8bd0; font-size: 24px; line-height: 44px; text-align: center; }
.more { width: 8px; height: 28px; margin-left: 38px; }

/* page header */
.header {
  position: relative; z-index: 2; height: 178px; background: #363636;
  display: flex; align-items: center; padding-left: 92px;
  box-shadow: 0 2px 18px rgba(0,0,0,.5);
}
h1 { width: 1823px; padding-bottom: 5px; font: 300 120px/173px Inter, Roboto, sans-serif; letter-spacing: -3.850px; white-space: nowrap; }
.caps { letter-spacing: .2px; margin-left: -4px; }
.version { width: 289px; font-size: 42px; letter-spacing: .3px; padding-bottom: 2px; }
.search {
  width: 1108px; height: 130px; border: 2px solid #fff; border-radius: 8px; background: transparent;
  padding: 0 26px 7px 25px; font: 45.300px "Liberation Sans", Arial, sans-serif; color: #fff;
}
.search::placeholder { color: #8f8f8f; opacity: 1; }

.content { display: flex; height: 1726px; }
.left { width: 2184px; flex: none; }

/* map */
.map { position: relative; height: 1468px; background: #95d3f5; overflow: hidden; }
.world { width: 2184px; height: 1468px; }
.world path { vector-effect: non-scaling-stroke; stroke-width: 2; stroke-linejoin: round; stroke: #e0d3d4; }
.world .c-can { fill: #f8e1e1; stroke: #e0cbcc; }
.world .c-grl { fill: #faeeee; stroke: #e1d6d6; }
.world .c-usa { fill: #e53328; stroke: #cd2e24; }
.world .c-rus { fill: #fae9ea; }
.world .fill-rus { fill: #fae9ea; stroke: none; }
.world .c-isl { fill: #fae8e8; }
.world .c-mex { fill: #faebeb; }
.world .c-few { fill: #faeded; }
.world .c-none { fill: #f5f5f5; stroke: #dddddd; }
.world .c-bra { fill: #f7e0e0; stroke: #dfcacb; }
.world .c-nor { fill: #f8dcde; stroke: #dfc6c8; }
.world .c-tur { fill: #f9e3e3; stroke: #e0cccc; }
.world .c-jpn { fill: #f9e3e4; stroke: #e0cccd; }
.world .c-gbr { fill: #f4c2c2; stroke: #dcafaf; }
.world .c-kor { fill: #f0a8a9; stroke: #d89798; }
.world .c-che { fill: #eda6a6; stroke: #d59595; }
.world .c-fra { fill: #ea7676; stroke: #d36a6a; }
.world .c-deu { fill: #e84f4c; stroke: #d14744; }
.world .c-irn { fill: #e95f5c; stroke: #d25553; }
.world .c-esp { fill: #e73d38; stroke: #d03732; }
.world .c-ita { fill: #cf2c21; stroke: #ba271e; }
.world .c-chn { fill: #70130f; stroke: #65110d; }
.map-menu { position: absolute; left: 53px; top: 49px; width: 14px; height: 54px; }
.legend {
  position: absolute; left: 15px; top: 1410px; display: flex; align-items: center; height: 36px;
  font-size: 30.500px; color: #000;
  text-shadow: 2px 0 #fff, -2px 0 #fff, 0 2px #fff, 0 -2px #fff, 2px 2px #fff, -2px -2px #fff, 2px -2px #fff, -2px 2px #fff;
}
.l-min { width: 34px; }
.ramp {
  width: 584px; height: 28px; margin-right: 15px;
  background:
    linear-gradient(90deg, transparent 97px, rgba(255,255,255,.25) 97px, rgba(255,255,255,.25) 98px, transparent 98px, transparent 194px, rgba(255,255,255,.25) 194px, rgba(255,255,255,.25) 195px, transparent 195px, transparent 389px, rgba(255,255,255,.2) 389px, rgba(255,255,255,.2) 390px, transparent 390px, transparent 486px, rgba(255,255,255,.2) 486px, rgba(255,255,255,.2) 487px, transparent 487px),
    linear-gradient(90deg, #fbeeee 0, #ea8a89 16.700%, #e8524f 33.300%, #e63327 50%, #e63327 66.700%, #b0241b 83.300%, #6f130f 100%);
}

/* footer */
.footer { height: 258px; background: #363636; box-shadow: 0 0 14px rgba(0,0,0,.15); position: relative; font-family: Inter, Roboto, sans-serif; font-weight: 300; }
.totals { display: flex; height: 168px; align-items: center; font-size: 55px; font-weight: 200; padding: 0 0 0 59px; }
.totals p { display: flex; align-items: center; white-space: nowrap; }
.totals i { width: 3px; height: 56px; margin-right: 20px; background: #fff; }
.totals b { font-weight: 200; }
.t1 { width: 626px; }
.t2 { width: 609px; }
.t1 span { width: 328px; }
.t2 span { width: 316px; }
.t3 span { width: 218px; }
.orange { color: #f0ad3e; letter-spacing: -.6px; }
.green { color: #5ba86b; }
.red { color: #e5423f; letter-spacing: 1.200px; }
.meta { display: flex; height: 90px; align-items: center; padding: 0 0 0 86px; font-size: 27.700px; white-space: nowrap; }
.note { width: 477px; }
.meta i { width: 2px; height: 28px; background: #fff; margin-right: 22px; }
.updated { width: 186px; letter-spacing: .2px; }
.meta strong { width: 513px; font-family: "Liberation Sans", Arial, sans-serif; font-weight: 700; font-size: 28px; font-kerning: none; letter-spacing: .1px; }
nav { display: flex; }
nav a { width: 225px; height: 28px; line-height: 28px; border-left: 2px solid #fff; text-align: center; color: #66ffff; font-weight: 400; font-family: "Liberation Sans", Arial, sans-serif; font-size: 28px; letter-spacing: .4px; }

/* country cards */
.cards {
  flex: 1; background: #f4f4f4; padding: 12px 12px 0 10px; align-content: start;
  display: grid; grid-template-columns: 572px 572px; grid-auto-rows: 276px; gap: 10px;
}
.card { background: #363636; border-radius: 8px; padding: 9px 12px; box-shadow: 0 3px 8px rgba(0,0,0,.45); font-kerning: none; }
.card h2 { display: flex; align-items: center; font-size: 48px; line-height: 64px; }
.flag { width: 60px; height: 40px; margin-right: 22px; }
.card p { font-size: 32px; line-height: 48px; padding-left: 8px; white-space: nowrap; }
.card s { text-decoration: none; font-size: 25px; line-height: 1; vertical-align: 4px; padding: 0 1px; }
```
